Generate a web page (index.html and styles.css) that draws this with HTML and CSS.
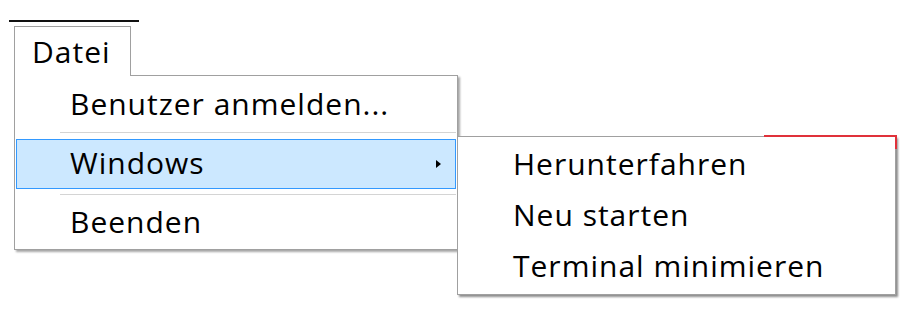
FILE: index.html
```html
<!doctype html>
<html>

<head>
    <title>Datei Menu</title>
    <meta charset="utf-8">
    <link rel="stylesheet" href="styles.css">
</head>

<body>
    <div class="topline"></div>
    <div class="tab">Datei</div>
    <div class="menus">
        <ul class="menu">
            <li class="item">Benutzer anmelden...</li>
            <li class="sep"></li>
            <li class="item active">Windows<span class="arrow"></span></li>
            <li class="sep"></li>
            <li class="item">Beenden</li>
        </ul>
        <ul class="submenu">
            <li class="edge"></li>
            <li class="item">Herunterfahren</li>
            <li class="item">Neu starten</li>
            <li class="item">Terminal minimieren</li>
        </ul>
    </div>
</body>

</html>
```

FILE: styles.css
```css
* {
    box-sizing: border-box;
}

body {
    margin: 0;
    width: 916px;
    height: 321px;
    background: #fff;
    font-family: "Open Sans", "Noto Sans", sans-serif;
    font-size: 30px;
    letter-spacing: 1px;
    color: #000;
    overflow: hidden;
}

.topline {
    width: 130px;
    height: 2px;
    margin: 20px 0 0 9px;
    background: #111;
}

.tab {
    position: relative;
    z-index: 2;
    width: 117px;
    height: 50px;
    margin: 4px 0 -1px 14px;
    padding: 6px 0 0 17px;
    border: 1px solid #a0a0a0;
    border-bottom: none;
    background: #fff;
    line-height: 38px;
}

.menus {
    display: flex;
    align-items: flex-start;
}

ul {
    list-style: none;
    margin: 0;
    padding: 0;
}

.menu {
    width: 444px;
    margin-left: 14px;
    padding: 1px 1px 0 1px;
    border: 1px solid #a0a0a0;
    background: #fff;
    box-shadow: 2px 2px 2px rgba(0, 0, 0, 0.35);
}

.menu .item {
    position: relative;
    height: 54px;
    padding-left: 53px;
    line-height: 52px;
    border: 1px solid transparent;
}

.menu .item.active {
    height: 50px;
    line-height: 45px;
    background: #cce8ff;
    border-color: #3399ff;
}

.menu .item:last-child {
    height: 51px;
    line-height: 45px;
}

.sep {
    height: 7px;
    margin-left: 44px;
    border-top: 1px solid #d4d4d4;
    margin-top: 1px;
}

.menu .sep:nth-child(4) {
    margin-top: 1px;
    height: 8px;
    border-top-width: 1px;
    position: relative;
    top: 4px;
}

.arrow {
    position: absolute;
    right: 14px;
    top: 20px;
    border-left: 5px solid #000;
    border-top: 4px solid transparent;
    border-bottom: 4px solid transparent;
}

.submenu {
    position: relative;
    width: 439px;
    margin: 61px 0 0 -1px;
    padding: 2px 0 2px 0;
    border: 1px solid #a0a0a0;
    background: #fff;
    box-shadow: 2px 2px 2px rgba(0, 0, 0, 0.45);
}

.submenu .item {
    height: 51px;
    padding-left: 55px;
    line-height: 50px;
}

.edge {
    position: absolute;
    top: -2px;
    right: -2px;
    width: 133px;
    height: 14px;
    border-top: 2px solid #e0313a;
    border-right: 2px solid #e0313a;
}
```
